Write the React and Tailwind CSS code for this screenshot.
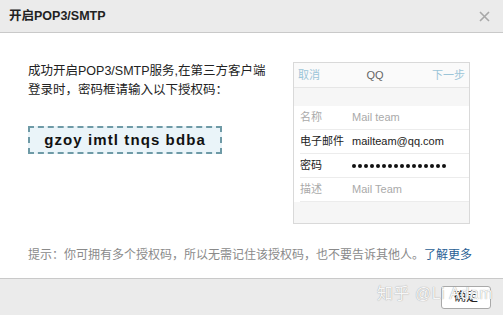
export default function App() {
  const font = { fontFamily: '"Liberation Sans", "Noto Sans CJK SC", sans-serif' };
  return (
    <div className="w-[503px] h-[315px] bg-white flex flex-col overflow-hidden" style={font}>
      <div className="h-[33px] shrink-0 bg-[#ebebeb] border-b border-[#c9c9c9] flex items-center justify-between pl-[9px] pr-[13px]">
        <span className="text-[12.5px] font-bold text-[#222]">开启POP3/SMTP</span>
        <svg width="11" height="11" viewBox="0 0 11 11" className="mt-[1px]">
          <path d="M1 1L10 10M10 1L1 10" stroke="#a8a8a8" strokeWidth="1.6" />
        </svg>
      </div>

      <div className="flex-1 flex flex-col px-[28px]">
        <div className="flex mt-[29px]">
          <div className="w-[237px] flex flex-col">
            <p className="text-[12.5px] leading-[19px] text-[#222] whitespace-nowrap">
              成功开启POP3/SMTP服务,在第三方客户端
              <br />
              登录时，密码框请输入以下授权码：
            </p>
            <div className="mt-[26px] w-[194px] h-[28px] bg-[#eaf4f9] border-2 border-dashed border-[#6e9aa6] flex items-center justify-center">
              <span className="text-[15px] font-bold tracking-[1.1px] text-[#111] whitespace-nowrap">
                gzoy imtl tnqs bdba
              </span>
            </div>
          </div>

          <div className="ml-[28px] w-[177px] h-[162px] border border-[#d9d9d9] bg-[#f6f6f6] flex flex-col text-[11px]">
            <div className="h-[25px] shrink-0 bg-[#fafafa] border-b border-[#e6e6e6] flex items-center justify-between px-[4px]">
              <span className="text-[#9cc5d8]">取消</span>
              <span className="text-[#666] -ml-[2px]">QQ</span>
              <span className="text-[#9cc5d8]">下一步</span>
            </div>
            <div className="h-[18px] shrink-0" />
            <div className="bg-white flex flex-col">
              <Row label="名称" value="Mail team" muted />
              <Row label="电子邮件" value="mailteam@qq.com" />
              <Row label="密码" dots />
              <Row label="描述" value="Mail Team" muted />
            </div>
          </div>
        </div>

        <p className="mt-[22px] text-[12px] text-[#8a8a8a] whitespace-nowrap">
          提示：你可拥有多个授权码，所以无需记住该授权码，也不要告诉其他人。
          <span className="text-[#2a5f95]">了解更多</span>
        </p>
      </div>

      <div className="h-[37px] shrink-0 bg-[#ebebeb] border-t border-[#c9c9c9] flex items-center justify-end pr-[12px] relative">
        <button className="w-[50px] h-[23px] bg-white border border-[#a9a9a9] rounded-[3px] text-[12px] text-[#222]">
          确定
        </button>
        <span
          className="absolute left-[377px] top-[3px] text-[16px] text-[#f7f7f7] tracking-[0.5px] pointer-events-none whitespace-nowrap"
          style={{ textShadow: '0 0 1px #8a8a8a' }}
        >
          知乎 @Li Adam
        </span>
      </div>
    </div>
  );
}

function Row({ label, value, muted, dots }) {
  const color = muted ? 'text-[#aaa]' : 'text-[#222]';
  return (
    <div className="h-[24px] flex items-center ml-[6px] border-b border-[#ececec]">
      <span className={`w-[52px] ${color}`}>{label}</span>
      {dots ? (
        <span className="flex gap-[2px]">
          {Array.from({ length: 16 }).map((_, i) => (
            <span key={i} className="w-[4px] h-[4px] rounded-full bg-[#111]" />
          ))}
        </span>
      ) : (
        <span className={color}>{value}</span>
      )}
    </div>
  );
}
